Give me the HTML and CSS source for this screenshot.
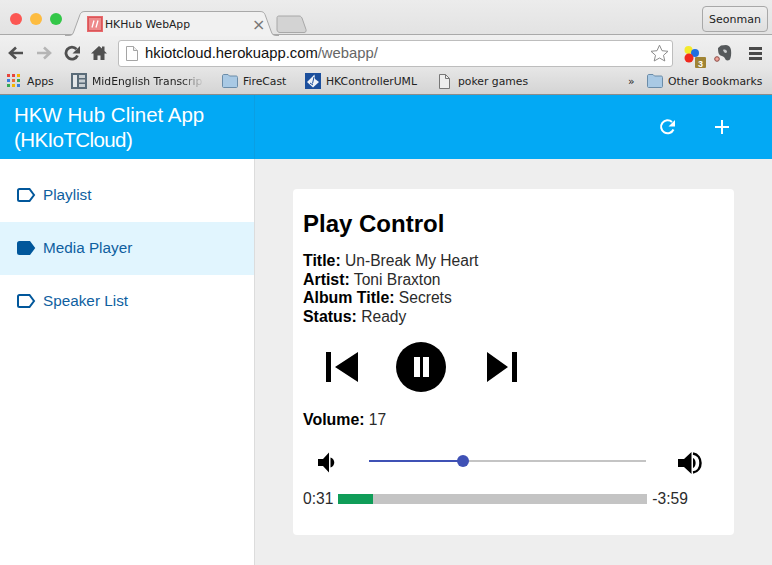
FILE: index.html
```html
<!DOCTYPE html>
<html>
	<head>
		<meta charset="UTF-8">
		<title>HKHub WebApp</title>
		<link rel="stylesheet" href="styles.css">
	</head>
	<body>
		<div class="browser">
			<div class="tabstrip">
				<div class="lights">
					<span class="light red"></span>
					<span class="light yellow"></span>
					<span class="light green"></span>
				</div>
				<div class="tab">
					<svg class="tab-shape" width="214" height="25" viewBox="0 0 214 25">
						<path d="M0 25H4C7 25 8 23 9 20L15 3.500C16 1.500 17 .5 20 .5H195C198 .5 199 1.500 200 3.500L206 20C207 23 208 25 211 25H214Z" fill="#f1f1f1"/>
						<path d="M0 24.500H4C7 24.500 8 23 9 20L15 3.500C16 1.500 17 .5 20 .5H195C198 .5 199 1.500 200 3.500L206 20C207 23 208 24.500 211 24.500H214" fill="none" stroke="#a9a9a9"/>
					</svg>
					<svg class="favicon" width="16" height="16" viewBox="0 0 16 16">
						<rect width="16" height="16" fill="#e8696c"/>
						<rect x="1.500" y="1.500" width="13" height="13" fill="#ee8a8b" stroke="#d9575a"/>
						<path d="M7 4.500L5 11.500M11 4.500L9 11.500" stroke="#fff" stroke-width="1.300" fill="none"/>
					</svg>
					<span class="tab-title">HKHub WebApp</span>
					<span class="tab-close">×</span>
				</div>
				<svg class="newtab" width="36" height="19" viewBox="0 0 36 19">
					<path d="M4 2.500C4 1.500 5 1 6 1H26C27.500 1 28 1.500 29 3L33 14.500C33.500 16.500 32.500 17.500 31 17.500H7C5 17.500 4.500 16.500 4 15Z" fill="#d3d3d3" stroke="#a8a8a8"/>
				</svg>
				<button class="profile">Seonman</button>
			</div>

			<div class="toolbar">
				<svg class="tool" width="18" height="16" viewBox="0 0 18 16">
					<path d="M16 8H4M9 2.500L3 8L9 13.500" fill="none" stroke="#505050" stroke-width="2.600"/>
				</svg>
				<svg class="tool" width="18" height="16" viewBox="0 0 18 16">
					<path d="M2 8H14M9 2.500L15 8L9 13.500" fill="none" stroke="#b5b5b5" stroke-width="2.600"/>
				</svg>
				<svg class="tool" width="18" height="16" viewBox="0 0 18 16">
					<path d="M14.500 10.500A6 6 0 1 1 13.500 4.200" fill="none" stroke="#505050" stroke-width="2.800"/>
					<path d="M17 1V8.500H9.500Z" fill="#505050"/>
				</svg>
				<svg class="tool" width="16" height="16" viewBox="0 0 16 16">
					<path d="M8 1L0 8.500H2.500V15H6.500V10.500H9.500V15H13.500V8.500H16L13.500 6V1.500H11V3.500Z" fill="#505050"/>
				</svg>
				<div class="omnibox">
					<svg class="page-icon" width="12" height="15" viewBox="0 0 12 15">
						<path d="M.5 .5H7.500L11.500 4.500V14.500H.5Z" fill="#fff" stroke="#a5a5a5"/>
						<path d="M7.500 .5V4.500H11.500" fill="#eee" stroke="#a5a5a5"/>
					</svg>
					<span class="url">hkiotcloud.herokuapp.com<span class="url-path">/webapp/</span></span>
					<svg class="star" width="19" height="18" viewBox="0 0 19 18">
						<path d="M9.500 1.200L12 6.700L18 7.300L13.500 11.300L14.800 17L9.500 14L4.200 17L5.500 11.300L1 7.300L7 6.700Z" fill="#fff" stroke="#8c8c8c"/>
					</svg>
				</div>
				<svg class="ext-balls" width="24" height="30" viewBox="0 0 24 30">
					<circle cx="5.500" cy="12" r="4" fill="#f4ea2c"/>
					<circle cx="12" cy="15" r="4" fill="#1f6fe0"/>
					<circle cx="6" cy="20" r="4.500" fill="#f0291e"/>
					<rect x="12" y="19" width="11" height="11" rx="1" fill="#a08434"/>
					<text x="17.500" y="28.500" class="ext-num">3</text>
				</svg>
				<svg class="ext-note" width="18" height="18" viewBox="0 0 18 18">
					<path d="M4 4L7 1.500L12 1C15 1.500 16.500 3 17 6C17.500 10 17 14 15.500 16C13.500 17 11.500 16.500 11 14.500C10 12.500 8.500 12 6.500 11.500C4.500 10.500 4 8 4 4Z" fill="#55595b"/>
					<path d="M9 6C11 5 13 6 13 8C12 10 10 9 9 6Z" fill="#c9cccd"/>
					<circle cx="3" cy="15" r="2.300" fill="#f2a49a" stroke="#8a4a44"/>
				</svg>
				<div class="menu-btn"><span></span><span></span><span></span></div>
			</div>

			<div class="bookmarks">
				<div class="bookmark apps">
					<svg width="14" height="14" viewBox="0 0 14 14">
						<rect x="0" y="0" width="3" height="3" fill="#e8453c"/><rect x="5" y="0" width="3" height="3" fill="#e8453c"/><rect x="10" y="0" width="3" height="3" fill="#f4b400"/>
						<rect x="0" y="5" width="3" height="3" fill="#3a7de0"/><rect x="5" y="5" width="3" height="3" fill="#e8693c"/><rect x="10" y="5" width="3" height="3" fill="#35a853"/>
						<rect x="0" y="10" width="3" height="3" fill="#35a853"/><rect x="5" y="10" width="3" height="3" fill="#f4b400"/><rect x="10" y="10" width="3" height="3" fill="#3a7de0"/>
					</svg>
					<span>Apps</span>
				</div>
				<div class="bookmark midenglish">
					<svg width="16" height="16" viewBox="0 0 16 16">
						<rect width="16" height="16" fill="#5a6b78"/>
						<rect x="2" y="2" width="4" height="12" fill="#e3e6e8"/>
						<rect x="8" y="2" width="6" height="3" fill="#c8ced2"/><rect x="8" y="6.500" width="6" height="3" fill="#c8ced2"/><rect x="8" y="11" width="6" height="3" fill="#c8ced2"/>
					</svg>
					<span class="fade">MidEnglish Transcrip</span>
				</div>
				<div class="bookmark firecast">
					<svg width="16" height="14" viewBox="0 0 16 14">
						<path d="M.5 2C.5 1 1 .5 2 .5H6L7.500 2H14C15 2 15.500 2.500 15.500 3.500V12.500C15.500 13 15 13.500 14.500 13.500H1.500C1 13.500 .5 13 .5 12.500Z" fill="#a9c9e4" stroke="#6b8ca8"/>
					</svg>
					<span>FireCast</span>
				</div>
				<div class="bookmark hkcontroller">
					<svg width="16" height="16" viewBox="0 0 16 16">
						<rect width="16" height="16" fill="#1c4f9c"/>
						<path d="M2 9L9.500 1.500L10 6L14 9L8 14.500Z" fill="#eef2f8"/>
						<path d="M9 4L7.500 10.500M5 10L8 12" stroke="#1c4f9c" fill="none"/>
					</svg>
					<span>HKControllerUML</span>
				</div>
				<div class="bookmark poker">
					<svg width="11" height="15" viewBox="0 0 11 15">
						<path d="M.5 .5H6.500L10.500 4.500V14.500H.5Z" fill="#eee" stroke="#777"/>
						<path d="M6.500 .5V4.500H10.500" fill="none" stroke="#777"/>
					</svg>
					<span>poker games</span>
				</div>
				<span class="more">»</span>
				<div class="bookmark">
					<svg width="16" height="14" viewBox="0 0 16 14">
						<path d="M.5 2C.5 1 1 .5 2 .5H6L7.500 2H14C15 2 15.500 2.500 15.500 3.500V12.500C15.500 13 15 13.500 14.500 13.500H1.500C1 13.500 .5 13 .5 12.500Z" fill="#a9c9e4" stroke="#6b8ca8"/>
					</svg>
					<span>Other Bookmarks</span>
				</div>
			</div>
		</div>

		<div class="app">
			<aside class="side">
				<h1 class="side-title">HKW Hub Clinet App <span class="title-sub">(HKIoTCloud)</span></h1>
				<ul class="nav">
					<li>
						<svg class="label-icon" width="19" height="14" viewBox="0 0 19 14"><path d="M2.500 1H12.500L17 7L12.500 13H2.500C1.500 13 1 12.500 1 11.500V2.500C1 1.500 1.500 1 2.500 1Z" fill="none" stroke="#01579b" stroke-width="2"/></svg>
						Playlist
					</li>
					<li class="active">
						<svg class="label-icon" width="19" height="14" viewBox="0 0 19 14"><path d="M2.500 1H12.500L17 7L12.500 13H2.500C1.500 13 1 12.500 1 11.500V2.500C1 1.500 1.500 1 2.500 1Z" fill="#01579b" stroke="#01579b" stroke-width="2"/></svg>
						Media Player
					</li>
					<li>
						<svg class="label-icon" width="19" height="14" viewBox="0 0 19 14"><path d="M2.500 1H12.500L17 7L12.500 13H2.500C1.500 13 1 12.500 1 11.500V2.500C1 1.500 1.500 1 2.500 1Z" fill="none" stroke="#01579b" stroke-width="2"/></svg>
						Speaker List
					</li>
				</ul>
			</aside>
			<main class="main">
				<div class="topbar">
					<svg class="top-icon" width="20" height="20" viewBox="0 0 20 20">
						<path d="M15.500 12.500A6.500 6.500 0 1 1 14 5" fill="none" stroke="#fff" stroke-width="2"/>
						<path d="M17 3V9.500H10.500Z" fill="#fff"/>
					</svg>
					<svg class="top-icon" width="20" height="20" viewBox="0 0 20 20">
						<path d="M3 10H17M10 3V17" fill="none" stroke="#fff" stroke-width="2"/>
					</svg>
				</div>
				<div class="content">
					<section class="card">
						<h2>Play Control</h2>
						<div class="info">
							<div><b>Title:</b> Un-Break My Heart</div>
							<div><b>Artist:</b> Toni Braxton</div>
							<div><b>Album Title:</b> Secrets</div>
							<div><b>Status:</b> Ready</div>
						</div>
						<div class="controls">
							<svg width="32" height="30" viewBox="0 0 32 30"><path d="M0 0H5V30H0ZM32 0V30L9 15Z" fill="#000"/></svg>
							<div class="pause"><span></span><span></span></div>
							<svg width="30" height="30" viewBox="0 0 30 30"><path d="M0 0L21 15L0 30ZM25 0H30V30H25Z" fill="#000"/></svg>
						</div>
						<div class="volume"><b>Volume:</b> 17</div>
						<div class="volume-row">
							<svg class="vol-low" width="18" height="21" viewBox="0 0 18 21"><path d="M0 7H5L11 .5V20.500L5 14H0Z" fill="#000"/><path d="M12.500 5.500C17.500 7 17.500 14 12.500 15.500Z" fill="#000"/></svg>
							<div class="slider">
								<div class="slider-fill"></div>
								<div class="slider-knob"></div>
							</div>
							<svg class="vol-high" width="25" height="22" viewBox="0 0 25 22"><path d="M0 7H6L13.500 0V22L6 15H0Z" fill="#000"/><path d="M15 6C18.500 7.500 18.500 14.500 15 16Z" fill="#000"/><path d="M15 1.500C25 3 25 19 15 20.500" fill="none" stroke="#000" stroke-width="2.500"/></svg>
						</div>
						<div class="progress-row">
							<span>0:31</span>
							<div class="progress"><div class="progress-fill"></div></div>
							<span>-3:59</span>
						</div>
					</section>
				</div>
			</main>
		</div>
	</body>
</html>
```

FILE: styles.css
```css
html, body{
	margin: 0;
	height: 565px;
	overflow: hidden;
}
body{
	font-family: "Liberation Sans", Arial, sans-serif;
	background-color: #eeeeee;
}

/* browser frame */
.browser{
	height: 95px;
	box-sizing: border-box;
	border-bottom: 1px solid #8c8c8c;
	background: linear-gradient(#ececec, #d2d2d2);
	font-family: "DejaVu Sans", sans-serif;
	font-size: 10.8px;
	color: #222;
}
.tabstrip{
	height: 35px;
	box-sizing: border-box;
	padding: 7px 0 0 10px;
	display: flex;
	align-items: flex-start;
	border-bottom: 1px solid #a9a9a9;
}
.lights{
	display: flex;
	gap: 8px;
	margin-top: 6px;
}
.light{
	width: 12px;
	height: 12px;
	border-radius: 50%;
}
.red{background-color: #fc5753;}
.yellow{background-color: #fdbc40;}
.green{background-color: #33c748;}
.tab{
	position: relative;
	width: 214px;
	height: 24px;
	margin: 4px 0 0 3px;
	padding: 2px 0 0 22px;
	box-sizing: border-box;
	display: flex;
	align-items: center;
	flex: none;
}
.tab-shape{
	position: absolute;
	left: 0;
	top: 0;
}
.favicon, .tab-title, .tab-close{
	position: relative;
}
.tab-title{
	margin-left: 2px;
	width: 147px;
}
.tab-close{
	font-size: 16px;
	color: #777;
}
.newtab{
	margin: 8px 0 0 -6px;
}
.profile{
	margin: -1px 4px 0 auto;
	width: 66px;
	height: 26px;
	padding: 0;
	background: linear-gradient(#eeeeee, #dfdfdf);
	border: 1px solid #a8a8a8;
	border-radius: 4px;
	font: 11px "DejaVu Sans", sans-serif;
	color: #222;
}
.toolbar{
	height: 33px;
	box-sizing: border-box;
	display: flex;
	align-items: center;
	padding: 3px 0 0 7px;
	background: linear-gradient(#f0f0f0, #e6e6e6);
}
.tool{
	margin-right: 10px;
	flex: none;
}
.omnibox{
	width: 555px;
	height: 27px;
	margin-left: 1px;
	flex: none;
	box-sizing: border-box;
	background-color: #fff;
	border: 1px solid #bdbdbd;
	border-radius: 3px;
	display: flex;
	align-items: center;
	padding: 0 3px 0 7px;
}
.url{
	margin-left: 7px;
	font: 14.8px "Liberation Sans", sans-serif;
	color: #111;
	flex: 1;
}
.url-path{
	color: #666;
}
.ext-balls{
	margin-left: 10px;
	flex: none;
}
.ext-num{
	font: bold 9px "Liberation Sans", sans-serif;
	fill: #fff;
	text-anchor: middle;
}
.ext-note{
	margin-left: 7px;
	flex: none;
}
.menu-btn{
	margin-left: 17px;
	width: 13px;
	display: flex;
	flex-direction: column;
	gap: 2px;
}
.menu-btn span{
	height: 3px;
	background-color: #4a4a4a;
}
.bookmarks{
	height: 26px;
	display: flex;
	align-items: center;
	padding-left: 7px;
	background: linear-gradient(#e6e6e6, #d4d4d4);
}
.bookmark{
	display: flex;
	align-items: center;
	gap: 5px;
	flex: none;
}
.apps{
	gap: 6px;
	width: 64px;
}
.midenglish{
	width: 151px;
}
.fade{
	width: 112px;
	overflow: hidden;
	white-space: nowrap;
	-webkit-mask-image: linear-gradient(to right, #000 80%, transparent);
}
.firecast{
	width: 83px;
}
.hkcontroller{
	width: 134px;
}
.poker{
	width: 189px;
	gap: 8px;
}
.more{
	width: 19px;
}

/* app */
.app{
	display: flex;
	height: 470px;
}
.side{
	width: 255px;
	flex: none;
	box-sizing: border-box;
	background-color: #fff;
	border-right: 1px solid #dcdcdc;
}
.side-title{
	margin: 0 -1px 0 0;
	height: 64px;
	box-sizing: border-box;
	padding: 7px 14px;
	background-color: #03a9f4;
	border-right: 1px solid #0a9fe3;
	font-size: 20.5px;
	line-height: 25px;
	font-weight: normal;
	color: #fff;
}
.title-sub{
	letter-spacing: -.6px;
}
.nav{
	margin: 0;
	padding: 10px 0 0;
	list-style: none;
}
.nav li{
	height: 53px;
	box-sizing: border-box;
	display: flex;
	align-items: center;
	gap: 7px;
	padding: 0 0 1px 17px;
	font-size: 15.3px;
	color: #0f5f9f;
}
.nav li.active{
	background-color: #e1f5fe;
}
.main{
	flex: 1;
	min-width: 0;
}
.topbar{
	height: 64px;
	background-color: #03a9f4;
	display: flex;
	align-items: center;
	justify-content: flex-end;
	gap: 34px;
	padding-right: 40px;
}
.content{
	padding: 30px 38px 0;
}
.card{
	height: 346px;
	box-sizing: border-box;
	padding: 19px 10px 0;
	background-color: #fff;
	border-radius: 4px;
	color: #2b2b2b;
	font-size: 15.6px;
	line-height: 18.6px;
}
.card h2{
	margin: 0 0 12px;
	font-size: 24px;
	line-height: 32px;
	color: #000;
}
.card b{
	color: #000;
	font-size: 15.9px;
}
.controls{
	display: flex;
	align-items: center;
	height: 50px;
	margin-top: 15.6px;
	padding-left: 23px;
}
.pause{
	width: 50px;
	height: 50px;
	margin: 0 41px 0 38px;
	border-radius: 50%;
	background-color: #000;
	display: flex;
	align-items: center;
	justify-content: center;
	gap: 3px;
}
.pause span{
	width: 6px;
	height: 20px;
	background-color: #fff;
}
.volume{
	margin-top: 19px;
}
.volume-row{
	display: flex;
	align-items: center;
	margin-top: 21px;
	height: 24px;
}
.vol-low{
	margin-left: 15px;
}
.slider{
	position: relative;
	width: 277px;
	height: 2px;
	margin: -4px 0 0 33px;
	background-color: #c4c4c4;
}
.slider-fill{
	width: 94px;
	height: 100%;
	background-color: #3f51b5;
}
.slider-knob{
	position: absolute;
	left: 88px;
	top: -5px;
	width: 12px;
	height: 12px;
	border-radius: 50%;
	background-color: #3f51b5;
}
.vol-high{
	margin-left: 32px;
}
.progress-row{
	display: flex;
	align-items: center;
	gap: 5px;
	margin-top: 15px;
}
.progress{
	width: 309px;
	height: 10px;
	background-color: #c4c4c4;
}
.progress-fill{
	width: 35px;
	height: 100%;
	background-color: #0f9d58;
}
```
